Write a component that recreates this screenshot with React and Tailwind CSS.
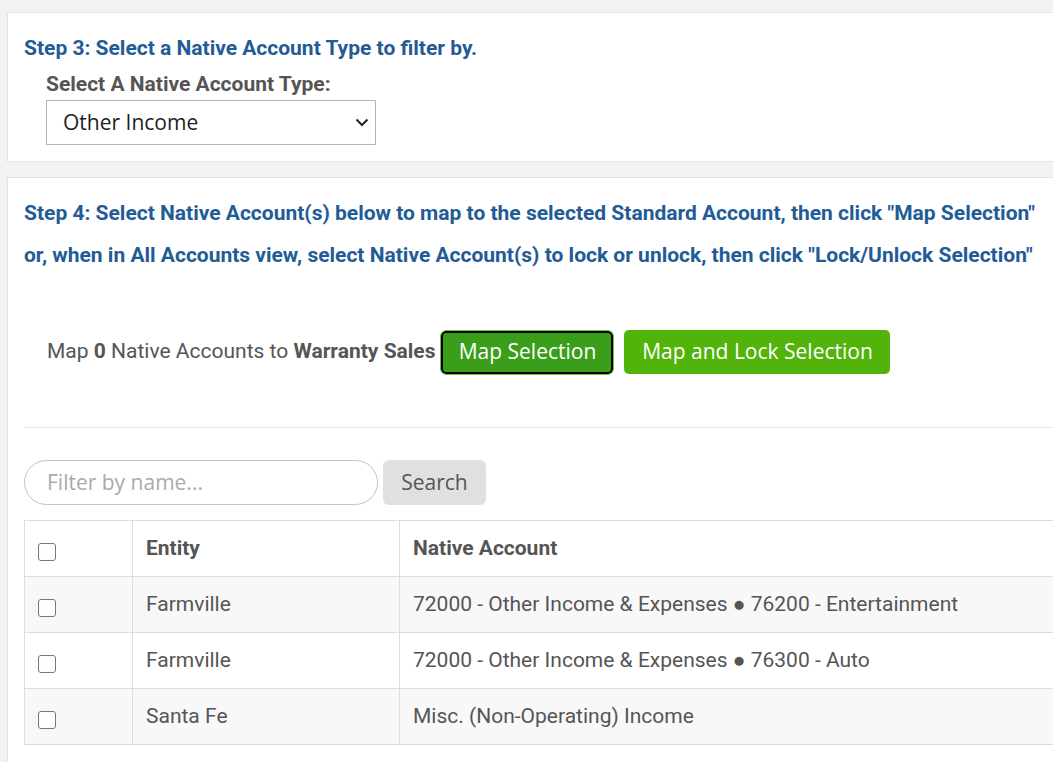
import React from 'react';

const rows = [
  { entity: 'Farmville', account: '72000 - Other Income & Expenses ● 76200 - Entertainment' },
  { entity: 'Farmville', account: '72000 - Other Income & Expenses ● 76300 - Auto' },
  { entity: 'Santa Fe', account: 'Misc. (Non-Operating) Income' },
];

const Checkbox = () => (
  <span className="inline-block w-[18px] h-[18px] border border-[#767676] rounded-[3px] bg-white align-middle" />
);

const App = () => {
  return (
    <div className="w-[1053px] h-[762px] overflow-hidden bg-[#f2f2f2] font-['Roboto',sans-serif] text-[#555]">
      <div className="w-[1100px] pl-[7px] pt-[12px] flex flex-col gap-[15px]">
        {/* step 3 */}
        <div className="bg-white border border-[#e3e3e3] pt-[22px] pb-[16px] px-[16px]">
          <h3 className="text-[21px] leading-[26px] font-bold text-[#225b96]">
            Step 3: Select a Native Account Type to filter by.
          </h3>
          <div className="pl-[22px] mt-[10px]">
            <div className="text-[21px] leading-[26px] font-bold text-[#555]">Select A Native Account Type:</div>
            <div className="mt-[3px] w-[330px] h-[45px] border border-[#b5b5b5] flex items-center justify-between pl-[16px] pr-[6px] font-['Open_Sans',sans-serif] text-[21px] text-[#222]">
              <span>Other Income</span>
              <svg width="14" height="9" viewBox="0 0 14 9" fill="none">
                <path d="M1.5 1.5 L7 7 L12.5 1.5" stroke="#222" strokeWidth="2" />
              </svg>
            </div>
          </div>
        </div>

        {/* step 4 */}
        <div className="bg-white border border-[#e3e3e3] pt-[14px] px-[16px] pb-[40px]">
          <h3 className="text-[21px] leading-[42px] font-bold text-[#225b96]">
            Step 4: Select Native Account(s) below to map to the selected Standard Account, then click "Map Selection"
            <br />
            or, when in All Accounts view, select Native Account(s) to lock or unlock, then click "Lock/Unlock Selection"
          </h3>

          <div className="mt-[54px] pl-[23px] flex items-center">
            <span className="text-[21px]">
              Map <b>0</b> Native Accounts to <b>Warranty Sales</b>
            </span>
            <button className="ml-[6px] w-[172px] h-[43px] rounded-[5px] bg-[#3a9e1a] text-white font-['Open_Sans',sans-serif] text-[21px] border-2 border-black outline outline-1 outline-[#6cc24a]">
              Map Selection
            </button>
            <button className="ml-[11px] w-[266px] h-[44px] rounded-[5px] bg-[#52b30a] text-white font-['Open_Sans',sans-serif] text-[21px]">
              Map and Lock Selection
            </button>
          </div>

          <hr className="mt-[53px] border-t border-[#e6e6e6]" />

          <div className="mt-[32px] flex items-center gap-[5px]">
            <div className="w-[354px] h-[45px] rounded-full border border-[#c4c4c4] flex items-center pl-[22px] font-['Open_Sans',sans-serif] text-[21px] text-[#aaa]">
              Filter by name...
            </div>
            <button className="w-[103px] h-[45px] rounded-[6px] bg-[#e0e0e0] font-['Open_Sans',sans-serif] text-[21px] text-[#555]">
              Search
            </button>
          </div>

          <table className="mt-[15px] w-full border-collapse text-[21px]">
            <thead>
              <tr className="h-[56px] border border-[#ddd]">
                <th className="w-[108px] pl-[13px] text-left border-r border-[#ddd] pt-[6px]">
                  <Checkbox />
                </th>
                <th className="w-[267px] pl-[13px] text-left font-bold border-r border-[#ddd]">Entity</th>
                <th className="pl-[13px] text-left font-bold">Native Account</th>
              </tr>
            </thead>
            <tbody>
              {rows.map((r, i) => (
                <tr key={i} className={`h-[56px] border border-[#ddd] ${i % 2 === 0 ? 'bg-[#f8f8f8]' : 'bg-white'}`}>
                  <td className="pl-[13px] border-r border-[#ddd] pt-[6px]">
                    <Checkbox />
                  </td>
                  <td className="pl-[13px] border-r border-[#ddd]">{r.entity}</td>
                  <td className="pl-[13px]">{r.account}</td>
                </tr>
              ))}
            </tbody>
          </table>
        </div>
      </div>
    </div>
  );
};

export default App;
